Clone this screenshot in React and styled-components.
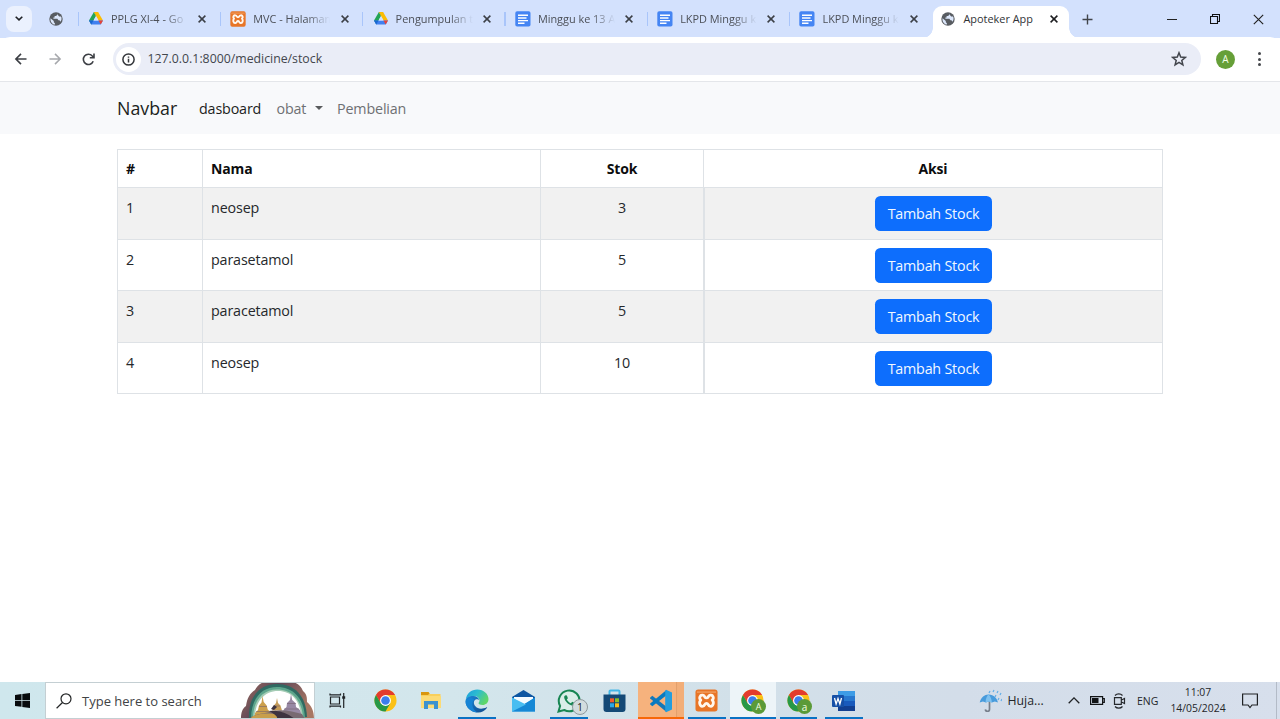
import React from "react";
import styled, { createGlobalStyle, css } from "styled-components";

const GlobalStyle = createGlobalStyle`
  *, *::before, *::after { box-sizing: border-box; }
  html, body { margin: 0; padding: 0; overflow: hidden; }
  body { font-family: "Open Sans", "Noto Sans", sans-serif; color: #212529; background: #fff; }
  svg { display: block; flex: none; }
`;

const Screen = styled.div`
  width: 1280px;
  height: 719px;
  display: flex;
  flex-direction: column;
  background: #fff;
`;

/* ---------- Browser frame ---------- */

const TabStrip = styled.div`
  height: 38px;
  display: flex;
  flex: none;
  background: #d3e1fd;
`;

const StripStart = styled.div`
  width: 77.5px;
  height: 37px;
  padding-left: 6px;
  display: flex;
  align-items: center;
  gap: 17px;
`;

const TabSearch = styled.button`
  width: 26px;
  height: 26px;
  padding: 0;
  border: 0;
  border-radius: 8px;
  display: grid;
  place-items: center;
  background: #ebf1fe;
`;

const Tab = styled.div`
  width: 142.3px;
  height: 37px;
  padding-left: ${(p) => (p.$drive ? 11.5 : 10.5)}px;
  display: flex;
  align-items: center;
  position: relative;
  color: #4c5058;

  &::before {
    content: "";
    position: absolute;
    left: 0;
    top: 12px;
    width: 1.4px;
    height: 14px;
    background: #a9c5fa;
  }
`;

const TabTitle = styled.div`
  width: ${(p) => p.$w || 77}px;
  margin-left: ${(p) => p.$ml || 8}px;
  font-size: 10.9px;
  line-height: 16px;
  white-space: nowrap;
  padding-top: 1px;
  ${(p) => p.$fade && css`mask-image: linear-gradient(to right, #000 70%, transparent 100%);`}
`;

const TabClose = styled.div`
  margin-left: ${(p) => p.$ml || 10}px;
`;

const ActiveTab = styled.div`
  width: 136px;
  height: 32px;
  margin: 6px 0 0 1.7px;
  padding: 0 0 7px 8.5px;
  display: flex;
  align-items: center;
  position: relative;
  border-radius: 9px 9px 0 0;
  background: #fff;
  color: #303236;

  &::before, &::after {
    content: "";
    position: absolute;
    bottom: 0;
    width: 10px;
    height: 10px;
  }
  &::before { left: -10px; background: radial-gradient(circle at 0 0, transparent 9.5px, #fff 10px); }
  &::after { right: -10px; background: radial-gradient(circle at 100% 0, transparent 9.5px, #fff 10px); }
`;

const NewTab = styled.div`
  display: flex;
  align-items: center;
  height: 38px;
  margin-left: 13px;
`;

const WindowControls = styled.div`
  display: flex;
  align-items: center;
  height: 38px;
  gap: 33px;
  margin-left: auto;
  padding-right: 16px;
`;

const Toolbar = styled.div`
  height: 45px;
  flex: none;
  display: flex;
  align-items: center;
  padding: 0 14px;
  background: #fff;
  border-bottom: 1px solid #e4e6ea;
  position: relative;
  margin-top: -1px;
  border-radius: 10px 10px 0 0;
`;

const NavButtons = styled.div`
  width: 99px;
  display: flex;
  gap: 20px;
`;

const AddressBar = styled.div`
  width: 1088px;
  height: 32px;
  display: flex;
  align-items: center;
  padding: 0 14px 0 3px;
  border-radius: 16px;
  background: #eaedf7;
`;

const SiteInfo = styled.div`
  width: 25px;
  height: 25px;
  border-radius: 50%;
  background: #fff;
  display: grid;
  place-items: center;
`;

const Url = styled.span`
  flex: 1;
  margin-left: 6.5px;
  font-size: 12.3px;
  line-height: 18px;
  color: #42464c;
`;

const Avatar = styled.div`
  width: 19px;
  height: 19px;
  margin-left: 15px;
  border-radius: 50%;
  background: #669f38;
  color: #f4ffe9;
  font-size: 10px;
  display: grid;
  place-items: center;
`;

const Menu = styled.div`
  width: 3px;
  margin-left: 22.5px;
  display: grid;
  gap: 2.2px;
`;

const MenuDot = styled.i`
  width: 3px;
  height: 3px;
  border-radius: 50%;
  background: #45474b;
`;

/* ---------- Page ---------- */

const Navbar = styled.nav`
  height: 52px;
  flex: none;
  display: flex;
  align-items: center;
  padding: 0 0 0 117px;
  background: #f8f9fb;
  white-space: nowrap;
`;

const Brand = styled.span`
  width: 82px;
  font-size: 17.8px;
  color: #1c1e20;
`;

const NavLink = styled.span`
  width: ${(p) => p.$w}px;
  display: flex;
  align-items: center;
  font-size: 14.3px;
  letter-spacing: ${(p) => p.$ls || -0.15}px;
  color: ${(p) => (p.$active ? "#1c1e1c" : "#6e7073")};
`;

const Caret = styled.i`
  margin: 0 0 0 8.5px;
  border: 4px solid transparent;
  border-top-color: #595b5d;
  border-bottom: 0;
`;

const Main = styled.main`
  flex: 1;
  padding: 15px 117px 0;
`;

const Table = styled.table`
  width: 1046px;
  table-layout: fixed;
  border-collapse: separate;
  border-spacing: 0;
  border: solid #dee2e6;
  border-width: 1px 0 0 1px;
  font-size: 14.3px;
  line-height: 22.5px;
  letter-spacing: -0.14px;
`;

const Row = styled.tr`
  height: ${(p) => p.$h}px;
  background: ${(p) => (p.$striped ? "#f1f1f1" : "#fff")};
`;

const cell = css`
  padding: 8.5px 8px 0;
  vertical-align: top;
  border: solid #dee2e6;
  border-width: 0 1px 1px 0;
  text-align: ${(p) => (p.$center ? "center" : "left")};
`;

const HeadCell = styled.th`
  ${cell}
  padding-top: 8px;
  font-weight: 700;
  font-size: 14px;
  color: #0c0d0e;
`;

const Cell = styled.td`
  ${cell}
  color: #25282b;
  ${(p) => p.$action && css`
    border-left-width: 1px;
    padding-top: 7.5px;
  `}
`;

const ActionButton = styled.button`
  display: block;
  width: 116.5px;
  height: 35.5px;
  margin: 0 auto;
  padding: 0;
  border: 0;
  border-radius: 5.5px;
  background: #0d6efd;
  color: #f2f8ff;
  font-family: inherit;
  font-size: 14.3px;
  letter-spacing: -0.2px;
`;

/* ---------- Taskbar ---------- */

const Taskbar = styled.footer`
  height: 37px;
  flex: none;
  display: flex;
  background: linear-gradient(90deg, #cfe7ed 0%, #d3e6ec 35%, #d2e0e9 58%, #d3dde9 75%, #d7dfec 100%);
`;

const Start = styled.div`
  width: 45px;
  display: grid;
  place-items: center;
`;

const Search = styled.div`
  width: 270px;
  display: flex;
  align-items: center;
  padding-left: 10px;
  border: 1px solid #c4cfd3;
  background: #fff;
  font-size: 13px;
  color: #414345;
  overflow: hidden;
`;

const SearchLabel = styled.span`
  width: 159px;
  margin-left: 10px;
  white-space: nowrap;
`;

const TaskView = styled.div`
  width: 47.5px;
  display: flex;
  align-items: center;
  padding-left: 14px;
`;

const TaskItem = styled.div`
  width: 45.9px;
  display: grid;
  place-items: center;
  position: relative;
  background: ${(p) => p.$bg || "transparent"};

  &::after {
    content: "";
    display: ${(p) => (p.$line ? "block" : "none")};
    position: absolute;
    bottom: 0;
    left: ${(p) => (p.$wide ? 0 : 4)}px;
    right: ${(p) => (p.$wide ? 0 : 4)}px;
    height: 2px;
    background: ${(p) => p.$line};
  }
`;

const Badge = styled.span`
  position: absolute;
  left: ${(p) => p.$x}px;
  top: ${(p) => p.$y}px;
  width: ${(p) => p.$s || 15}px;
  height: ${(p) => p.$s || 15}px;
  border-radius: 50%;
  display: grid;
  place-items: center;
  font-size: ${(p) => p.$fs || 9}px;
  line-height: 1;
  color: ${(p) => p.$fg || "#f2ffe4"};
  background: ${(p) => p.$bg || "#5b9a38"};
  border: ${(p) => p.$border || "0"};
`;

const Tray = styled.div`
  margin-left: auto;
  display: flex;
  align-items: center;
  color: #242629;
`;

const TrayIcon = styled.span`
  margin-left: ${(p) => p.$ml || 0}px;
`;

const Weather = styled.span`
  width: 60px;
  margin-left: 6px;
  font-size: 12.3px;
`;

const Language = styled.span`
  width: 32px;
  margin-left: 11px;
  font-size: 10.5px;
`;

const Clock = styled.div`
  width: 58px;
  text-align: center;
  font-size: 10.4px;
  line-height: 16.5px;
  padding-bottom: 1px;
`;

const DesktopEdge = styled.div`
  width: 4px;
  height: 37px;
  margin-left: 18px;
  border-left: 1px solid #b3bbc7;
`;

/* ---------- Icons ---------- */

const Globe = () => (
  <svg width="14" height="14" viewBox="0 0 14 14">
    <circle cx="7" cy="7" r="6.7" fill="#585c61" />
    <path d="M1.5 6.2 4.8 9v1.2l1.1 1v1.4C3 12.2 1.2 9.7 1.5 6.2ZM8.5 1.5v1.2L7 4H5.6v1.4H4.4v1.3h4l1 1.6h1.1l.9 1.4c1.3-1.5 1.5-3.3.7-5.1h-2L9.1 3.2Z" fill="#dce7fb" />
  </svg>
);

const Drive = () => (
  <svg width="14" height="13" viewBox="0 0 14 13">
    <path d="M4.9 0h4.2L7 3.7Z" fill="#188038" />
    <path d="M4.9 0 0 8.6l2.3 3.9L7 3.9Z" fill="#23a455" />
    <path d="M4.9 0h4.2L14 8.6H9.5Z" fill="#fbbc04" />
    <path d="M0 8.6h14l-2.3 3.9H2.3Z" fill="#4080f0" />
    <path d="M9.5 8.6H14l-2.3 3.9Z" fill="#ea4335" />
    <path d="M0 8.6h4.5l-2.2 3.9Z" fill="#1967d2" />
    <path d="M7 4.200 9.500 8.600h-5Z" fill="#d3e1fd" />
  </svg>
);

const Docs = () => (
  <svg width="16" height="16" viewBox="0 0 16 16">
    <rect x=".3" y=".3" width="15.2" height="15.2" rx="1.8" fill="#4585f3" />
    <path d="M3 4.200h10M3 7h8.500M3 9.600h10M3 12.200h6.500" stroke="#fff" strokeWidth="1.4" />
  </svg>
);

const Xampp = ({ size = 16 }) => (
  <svg width={size} height={size} viewBox="0 0 24 24">
    <rect x=".5" y=".5" width="23" height="23" rx="2.8" fill="#e87527" />
    <path d="M2 3.2h20" stroke="#f7b27b" strokeWidth="1" />
    <g fill="none" stroke="#fff7ee" strokeWidth="2.9" strokeLinecap="round" strokeLinejoin="round">
      <path d="M8.3 6.5c-3.2-.7-4.5 3-2.2 5C3.7 13.800 5 18.700 8.200 18c2.200-.4 1.600-2.900 3.800-2.900s1.600 2.500 3.800 2.900c3.200.7 4.500-4.200 2.100-6.500 2.300-2 1-5.700-2.200-5-2.200.4-1.500 3-3.700 3s-1.500-2.600-3.700-3Z" />
      <path d="M9.500 12h5" stroke="#e87527" strokeWidth="2" />
    </g>
  </svg>
);

const Cross = ({ color = "#3b3f46", size = 8, w = 1.5 }) => (
  <svg width={size} height={size} viewBox="0 0 8 8" fill="none" stroke={color} strokeWidth={w}>
    <path d="m.6.6 6.800 6.800M7.400.6.6 7.400" />
  </svg>
);

const Chrome = () => (
  <svg width="23" height="23" viewBox="0 0 24 24">
    <circle cx="12" cy="12" r="11.500" fill="#fbc116" />
    <path d="M2.040 6.250A11.500 11.500 0 0 1 21.960 6.250H12L7 14.900Z" fill="#e33b2e" />
    <path d="M2.040 6.250A11.500 11.500 0 0 0 12 23.500l5-8.650-10 .1Z" fill="#279847" />
    <circle cx="12" cy="12" r="5.700" fill="#fff" />
    <circle cx="12" cy="12" r="4.500" fill="#3b7ded" />
  </svg>
);

const Explorer = () => (
  <svg width="22" height="19" viewBox="0 0 22 19">
    <path d="M1 1h7.500l1.500 2h10.500v14H1Z" fill="#f8cf5c" />
    <path d="M1 1h7.500l1 1.500L8 4H1Z" fill="#d9960f" />
    <path d="M1 5h20v12H1Z" fill="#fcdb76" />
    <path d="M4 18v-8h14v8h-4v-4.500H8V18Z" fill="#3d92cf" />
  </svg>
);

const Edge = () => (
  <svg width="24" height="24" viewBox="0 0 24 24">
    <defs>
      <linearGradient id="edgeTop" x1="0" y1="0" x2="1" y2=".5">
        <stop offset="0" stopColor="#1b9de0" />
        <stop offset=".5" stopColor="#2dbccf" />
        <stop offset="1" stopColor="#5fd668" />
      </linearGradient>
      <linearGradient id="edgeLow" x1="0" y1="0" x2="1" y2="1">
        <stop offset="0" stopColor="#1b87d8" />
        <stop offset="1" stopColor="#114a8b" />
      </linearGradient>
    </defs>
    <path d="M.7 11C1.400 4.500 6.400.5 12.200.5 18.800.5 23.500 5 23.500 10c0 3.700-2.700 6-5.900 6-2.600 0-4.100-.9-4.100-1.700 0-.6 1-1 1-2.800 0-2.500-2.500-4.400-5.400-4.400C4.800 7.100 1.500 9.400.7 11Z" fill="url(#edgeTop)" />
    <path d="M.6 12C1 8.800 4.400 6.900 8.400 7.100c3 .1 5.500 1.900 5.800 4-.7-.9-2.200-1.300-3.500-.6-2.300 1.300-2.200 4.500-.5 6.600 2.400 3 6.900 3.500 11.500 1.200.4-.2.600.2.400.5-2.300 3.400-5.900 5-9.700 4.700C6.100 23.200.2 18 .6 12Z" fill="url(#edgeLow)" />
    <path d="M9.100 10.700c-2.800 2.600-2.600 9.300 3.300 12.700C6 23.200.2 18 .6 12 1.300 8.900 7 7.800 9.100 10.700Z" fill="#1683d5" />
  </svg>
);

const Mail = () => (
  <svg width="23" height="22" viewBox="0 0 23 22">
    <path d="M0 7 11.500 0 23 7v3H0Z" fill="#0d56a2" />
    <path d="M2 7h19v9H2Z" fill="#f4fbff" />
    <path d="M0 7.500 11.500 15 23 7.500V21.500H0Z" fill="#2ba1e7" />
    <path d="m0 21.500 23-14v14Z" fill="#1688d5" />
    <path d="m0 7.500 14 7L0 21.500Z" fill="#48bdf1" />
  </svg>
);

const WhatsApp = () => (
  <svg width="24" height="24" viewBox="0 0 24 24">
    <path d="m1.500 22.500 1.600-5.600A10.400 10.400 0 1 1 7.200 21Z" fill="#d9eee8" stroke="#188653" strokeWidth="2" />
    <path d="M8.700 6.200 7.400 7.100c-1.500 3.200 4.200 9.700 8.400 9.600 1.300-.1 2.300-1 2.400-2.500l-2.900-1.500-1.500 1.600c-2-.8-3.300-2.200-4-3.700l1.100-1.300-1-2.900Z" fill="#188653" />
  </svg>
);

const Store = () => (
  <svg width="23" height="24" viewBox="0 0 23 24">
    <path d="M6.500 6V2.500c0-.8.500-1 1-1h8c.7 0 1 .3 1 1V6" fill="none" stroke="#44b8e8" strokeWidth="2" />
    <path d="M.5 5.500h22V20a3 3 0 0 1-3 3h-16a3 3 0 0 1-3-3Z" fill="#144976" />
    <path d="M7 9.300h4v4H7Z" fill="#f15a2d" />
    <path d="M12 9.300h4v4h-4Z" fill="#83bd2c" />
    <path d="M7 14.300h4v4H7Z" fill="#29a9e9" />
    <path d="M12 14.300h4v4h-4Z" fill="#fbbb18" />
  </svg>
);

const VSCode = () => (
  <svg width="24" height="24" viewBox="0 0 24 24">
    <path d="M1 8.700 3.300 6.800 17.500 17.700V23L1.200 9.600Z" fill="#1378b9" />
    <path d="M1 15.300 3.300 17.200 17.500 6.300V1L1.200 14.400Z" fill="#087bc1" />
    <path d="M17 .7 23 3.400v17.200l-6 2.700-.8-1V1.700Z" fill="#249ddd" />
  </svg>
);

const Word = () => (
  <svg width="24" height="22" viewBox="0 0 24 22">
    <path d="M6 1h17v5H6Z" fill="#3d9ce6" />
    <path d="M6 6h17v5H6Z" fill="#2878cf" />
    <path d="M6 11h17v5H6Z" fill="#195abc" />
    <path d="M6 16h17v5H6Z" fill="#123f91" />
    <rect x="0" y="5" width="12" height="12" rx="1" fill="#1650a7" />
    <path d="m2.500 8 1.600 6L6 8.500 7.900 14l1.600-6" fill="none" stroke="#fff" strokeWidth="1.300" />
  </svg>
);

const SearchArt = () => (
  <svg width="73" height="37" viewBox="0 0 73 37">
    <defs>
      <linearGradient id="caveRock" x1="0" y1="0" x2="1" y2=".4">
        <stop offset="0" stopColor="#a0705c" />
        <stop offset=".45" stopColor="#5f4658" />
        <stop offset="1" stopColor="#a87763" />
      </linearGradient>
    </defs>
    <path d="M0 37C0 31 1 27 5 24c1-8 4-13 9-16 2-4 6-8 11-8h27c4 1 8 4 10 9 4 3 4 7 4 11 5 4 7 10 7 17Z" fill="url(#caveRock)" />
    <path d="M8 37C7 14 19 2 36 2s29 11 30 33Z" fill="#2f6a62" />
    <path d="M10 37C10 16 21 5 36 5s27 10 28 31Z" fill="#5da58c" />
    <path d="M12 37C12 18 22 7.500 36 7.500S61 17 62 36Z" fill="#a5ccb5" />
    <path d="M14 35C14 19 24 9 37 9s22 9 23 25Z" fill="#fff" />
    <path d="m21.500 14 1.200 6 3 3.500 1 4 3.300 3V34H14v-3l3-3 1-4.500 2.500-3Z" fill="#cda04b" />
    <path d="m36 16 1 5 2.500 2.500 1.500 5h-10l1.500-4.500L35 21Z" fill="#c79d58" />
    <path d="m50 12 1.200 6 3.300 3 .5 4 4 3 2 6H41l1.500-6 3-3 .5-4 3-3Z" fill="#9889a4" />
    <path d="M18 24.500h8M15 29.500h14M33 24h6M46 21.500h9M43 27h15" stroke="#75606c" strokeWidth=".8" opacity=".7" />
    <path d="M10 35c8-4 17-4 23-6 9-2 20 1 28 3l3 5H9Z" fill="#786a72" />
    <path d="M12 34c8-3 18-3 24-1l2 4H9Z" fill="#c89e4c" />
    <path d="m33 23 3 2-3 3-3-1Z" fill="#3d3340" />
    <path d="M28 29c10-1 15 2 20 4l6 4H36c1-3-3-5-8-8Z" fill="#3d3340" />
  </svg>
);

const Umbrella = () => (
  <svg width="23" height="24" viewBox="0 0 23 24">
    <path d="M10.500 10v10.200c0 2.700-4 2.700-4.100.2" fill="none" stroke="#777f8b" strokeWidth="1.700" />
    <path d="M.7 13.500C2 8 6 5.300 9.700 5.500c5 .2 8.700 3.700 9.200 8l-3-1-3 1-3-1-3 1-3-1Z" fill="#489bdc" />
    <path d="M6.500 13.500c.2-4 1.500-7 3.200-8 2 2 3 5 3.200 8l-3-1Z" fill="#7fc1ef" />
    <path d="m11 2-1 2m5-3-1 2m5-1-1 2m4 0-1 2m-4 0-1 2m4 1-1 2m4-1-1 2" stroke="#62aee8" strokeWidth="1.200" />
  </svg>
);

/* ---------- Data ---------- */

const tabs = [
  { icon: "drive", title: "PPLG XI-4 - Go" },
  { icon: "xampp", title: "MVC - Halaman" },
  { icon: "drive", title: "Pengumpulan t" },
  { icon: "docs", title: "Minggu ke 13 A" },
  { icon: "docs", title: "LKPD Minggu k" },
  { icon: "docs", title: "LKPD Minggu k" },
];

const medicines = [
  { name: "neosep", stock: 3 },
  { name: "parasetamol", stock: 5 },
  { name: "paracetamol", stock: 5 },
  { name: "neosep", stock: 10 },
];

const favicons = { drive: <Drive />, xampp: <Xampp />, docs: <Docs /> };
const BLUE = "#0a72c4";

function BrowserTabs() {
  return (
    <TabStrip>
      <StripStart>
        <TabSearch>
          <svg width="8" height="5" viewBox="0 0 8 5" fill="none" stroke="#202226" strokeWidth="1.600"><path d="m.7.7 3.300 3.200L7.300.7" /></svg>
        </TabSearch>
        <Globe />
      </StripStart>
      {tabs.map((t, i) => (
        <Tab key={i} $drive={t.icon === "drive"}>
          {favicons[t.icon]}
          <TabTitle $fade $w={77} $ml={t.icon === "drive" ? 8 : 7}>{t.title}</TabTitle>
          <TabClose $ml={10.3}><Cross /></TabClose>
        </Tab>
      ))}
      <ActiveTab>
        <Globe />
        <TabTitle $w={77}>Apoteker App</TabTitle>
        <TabClose $ml={10}><Cross color="#1c1d20" /></TabClose>
      </ActiveTab>
      <NewTab>
        <svg width="11" height="11" viewBox="0 0 11 11" stroke="#41444a" strokeWidth="1.400"><path d="M5.500.5v10M.5 5.500h10" /></svg>
      </NewTab>
      <WindowControls>
        <svg width="10" height="10" viewBox="0 0 10 10" stroke="#222" strokeWidth="1"><path d="M0 5.500h10" /></svg>
        <svg width="10" height="10" viewBox="0 0 10 10" fill="none" stroke="#111" strokeWidth="1.100"><path d="M.5 2.500h7v7h-7ZM2.500 2.500v-2h7v7h-2" /></svg>
        <Cross size={11} w={0.85} color="#222" />
      </WindowControls>
    </TabStrip>
  );
}

function BrowserToolbar() {
  return (
    <Toolbar>
      <NavButtons>
        <svg width="14" height="12" viewBox="0 0 14 12" fill="none" stroke="#3c3f44" strokeWidth="1.600"><path d="M12.500 6H2M7 .9 1.900 6 7 11.100" /></svg>
        <svg width="14" height="12" viewBox="0 0 14 12" fill="none" stroke="#a6a8ac" strokeWidth="1.500"><path d="M1.500 6H12M7 .9 12.100 6 7 11.100" /></svg>
        <svg width="13" height="13" viewBox="0 0 13 13" fill="none" stroke="#3c3f44" strokeWidth="1.600"><path d="M11.200 8.200A5.100 5.100 0 1 1 10.300 3l1.400 1.500M12 .5v4.200H7.800" /></svg>
      </NavButtons>
      <AddressBar>
        <SiteInfo>
          <svg width="13" height="13" viewBox="0 0 13 13" fill="none" stroke="#34373b" strokeWidth="1.500"><circle cx="6.500" cy="6.500" r="5.600" /><path d="M6.500 5.800v3.700M6.500 3.400v1.400" /></svg>
        </SiteInfo>
        <Url>127.0.0.1:8000/medicine/stock</Url>
        <svg width="16" height="16" viewBox="0 0 16 16" fill="none" stroke="#43464d" strokeWidth="1.500"><path d="m8 1.800 1.700 4.300 4.600.3-3.500 3 1.100 4.400L8 11.400l-3.900 2.400 1.100-4.400-3.500-3 4.600-.3Z" /></svg>
      </AddressBar>
      <Avatar>A</Avatar>
      <Menu><MenuDot /><MenuDot /><MenuDot /></Menu>
    </Toolbar>
  );
}

function StockTable() {
  return (
    <Table>
      <colgroup>
        <col style={{ width: 85 }} /><col style={{ width: 338 }} /><col style={{ width: 163 }} /><col style={{ width: 459 }} />
      </colgroup>
      <thead>
        <Row $h={38}>
          <HeadCell>#</HeadCell>
          <HeadCell>Nama</HeadCell>
          <HeadCell $center>Stok</HeadCell>
          <HeadCell $center>Aksi</HeadCell>
        </Row>
      </thead>
      <tbody>
        {medicines.map((m, i) => (
          <Row key={i} $striped={i % 2 === 0} $h={i % 2 === 0 ? 52 : 51}>
            <Cell>{i + 1}</Cell>
            <Cell>{m.name}</Cell>
            <Cell $center>{m.stock}</Cell>
            <Cell $center $action><ActionButton>Tambah Stock</ActionButton></Cell>
          </Row>
        ))}
      </tbody>
    </Table>
  );
}

function WindowsTaskbar() {
  return (
    <Taskbar>
      <Start>
        <svg width="15" height="15" viewBox="0 0 15 15" fill="#080b0d"><path d="M0 2 6.500 1v6H0ZM7.300.9 15 0v7H7.300ZM0 7.800h6.500v6L0 13ZM7.300 7.800H15V15l-7.700-1Z" /></svg>
      </Start>
      <Search>
        <svg width="16" height="16" viewBox="0 0 16 16" fill="none" stroke="#232526" strokeWidth="1.200"><circle cx="10" cy="5.800" r="5" /><path d="M6.500 9.500.6 15.300" /></svg>
        <SearchLabel>Type here to search</SearchLabel>
        <SearchArt />
      </Search>
      <TaskView>
        <svg width="17" height="15" viewBox="0 0 17 15" fill="none" stroke="#202326" strokeWidth="1.200"><path d="M1.500 4h9v7h-9ZM1 .5v1.300h10.500V.5M1 14.500v-1.300h10.500v1.300M14.700 0v15" /><path d="M13.200 4.500h3" strokeWidth="2.500" /></svg>
      </TaskView>
      <TaskItem><Chrome /></TaskItem>
      <TaskItem><Explorer /></TaskItem>
      <TaskItem $line={BLUE}><Edge /></TaskItem>
      <TaskItem><Mail /></TaskItem>
      <TaskItem $line={BLUE}>
        <WhatsApp />
        <Badge $x={26} $y={17} $s={16} $fs={10.500} $fg="#16191a" $bg="#d3dcdf" $border="1px solid #8f999c">1</Badge>
      </TaskItem>
      <TaskItem><Store /></TaskItem>
      <TaskItem $bg="linear-gradient(90deg, #f6b27d 82%, #df9c68 83%, #f2ae79 86%)" $line="#f76808" $wide><VSCode /></TaskItem>
      <TaskItem $line={BLUE}><Xampp size={23} /></TaskItem>
      <TaskItem $bg="#edf4f8" $line={BLUE} $wide><Chrome /><Badge $x={21.5} $y={17}>A</Badge></TaskItem>
      <TaskItem $line={BLUE}><Chrome /><Badge $x={21.5} $y={17} $fs={10}>a</Badge></TaskItem>
      <TaskItem $line={BLUE}><Word /></TaskItem>
      <Tray>
        <Umbrella />
        <Weather>Huja...</Weather>
        <svg width="12" height="7" viewBox="0 0 12 7" fill="none" stroke="#202225" strokeWidth="1.300"><path d="m.7 6.200 5.300-5.300 5.300 5.300" /></svg>
        <TrayIcon $ml={10}>
          <svg width="15" height="9" viewBox="0 0 15 9"><path d="M.6.6h12v7.800H.6ZM13 2.700h1.300v3.600H13" fill="none" stroke="#121416" strokeWidth="1.200" /><path d="M2 2h6.500v5H2Z" fill="#121416" /></svg>
        </TrayIcon>
        <TrayIcon $ml={8.5}>
          <svg width="13" height="16" viewBox="0 0 13 16" fill="none" stroke="#26292d" strokeWidth="1.200"><path d="M1.500 4.700h6.800v6.600H1.500ZM8.500 7l3-1.500v5L8.500 9M2 2.500C4 .3 7.500.3 9.500 2.500M2 13.500c2 2.200 5.500 2.200 7.500 0" /></svg>
        </TrayIcon>
        <Language>ENG</Language>
        <Clock><div>11:07</div><div>14/05/2024</div></Clock>
        <TrayIcon $ml={15}>
          <svg width="16" height="16" viewBox="0 0 16 16" fill="none" stroke="#202225" strokeWidth="1.200"><path d="M.6 1h14.800v11H10l-2 2.500L6 12H.6Z" /></svg>
        </TrayIcon>
        <DesktopEdge />
      </Tray>
    </Taskbar>
  );
}

export default function App() {
  return (
    <Screen>
      <GlobalStyle />
      <BrowserTabs />
      <BrowserToolbar />
      <Navbar>
        <Brand>Navbar</Brand>
        <NavLink $w={77.5} $active>dasboard</NavLink>
        <NavLink $w={60.5}>obat<Caret /></NavLink>
        <NavLink $w={80}>Pembelian</NavLink>
      </Navbar>
      <Main><StockTable /></Main>
      <WindowsTaskbar />
    </Screen>
  );
}
